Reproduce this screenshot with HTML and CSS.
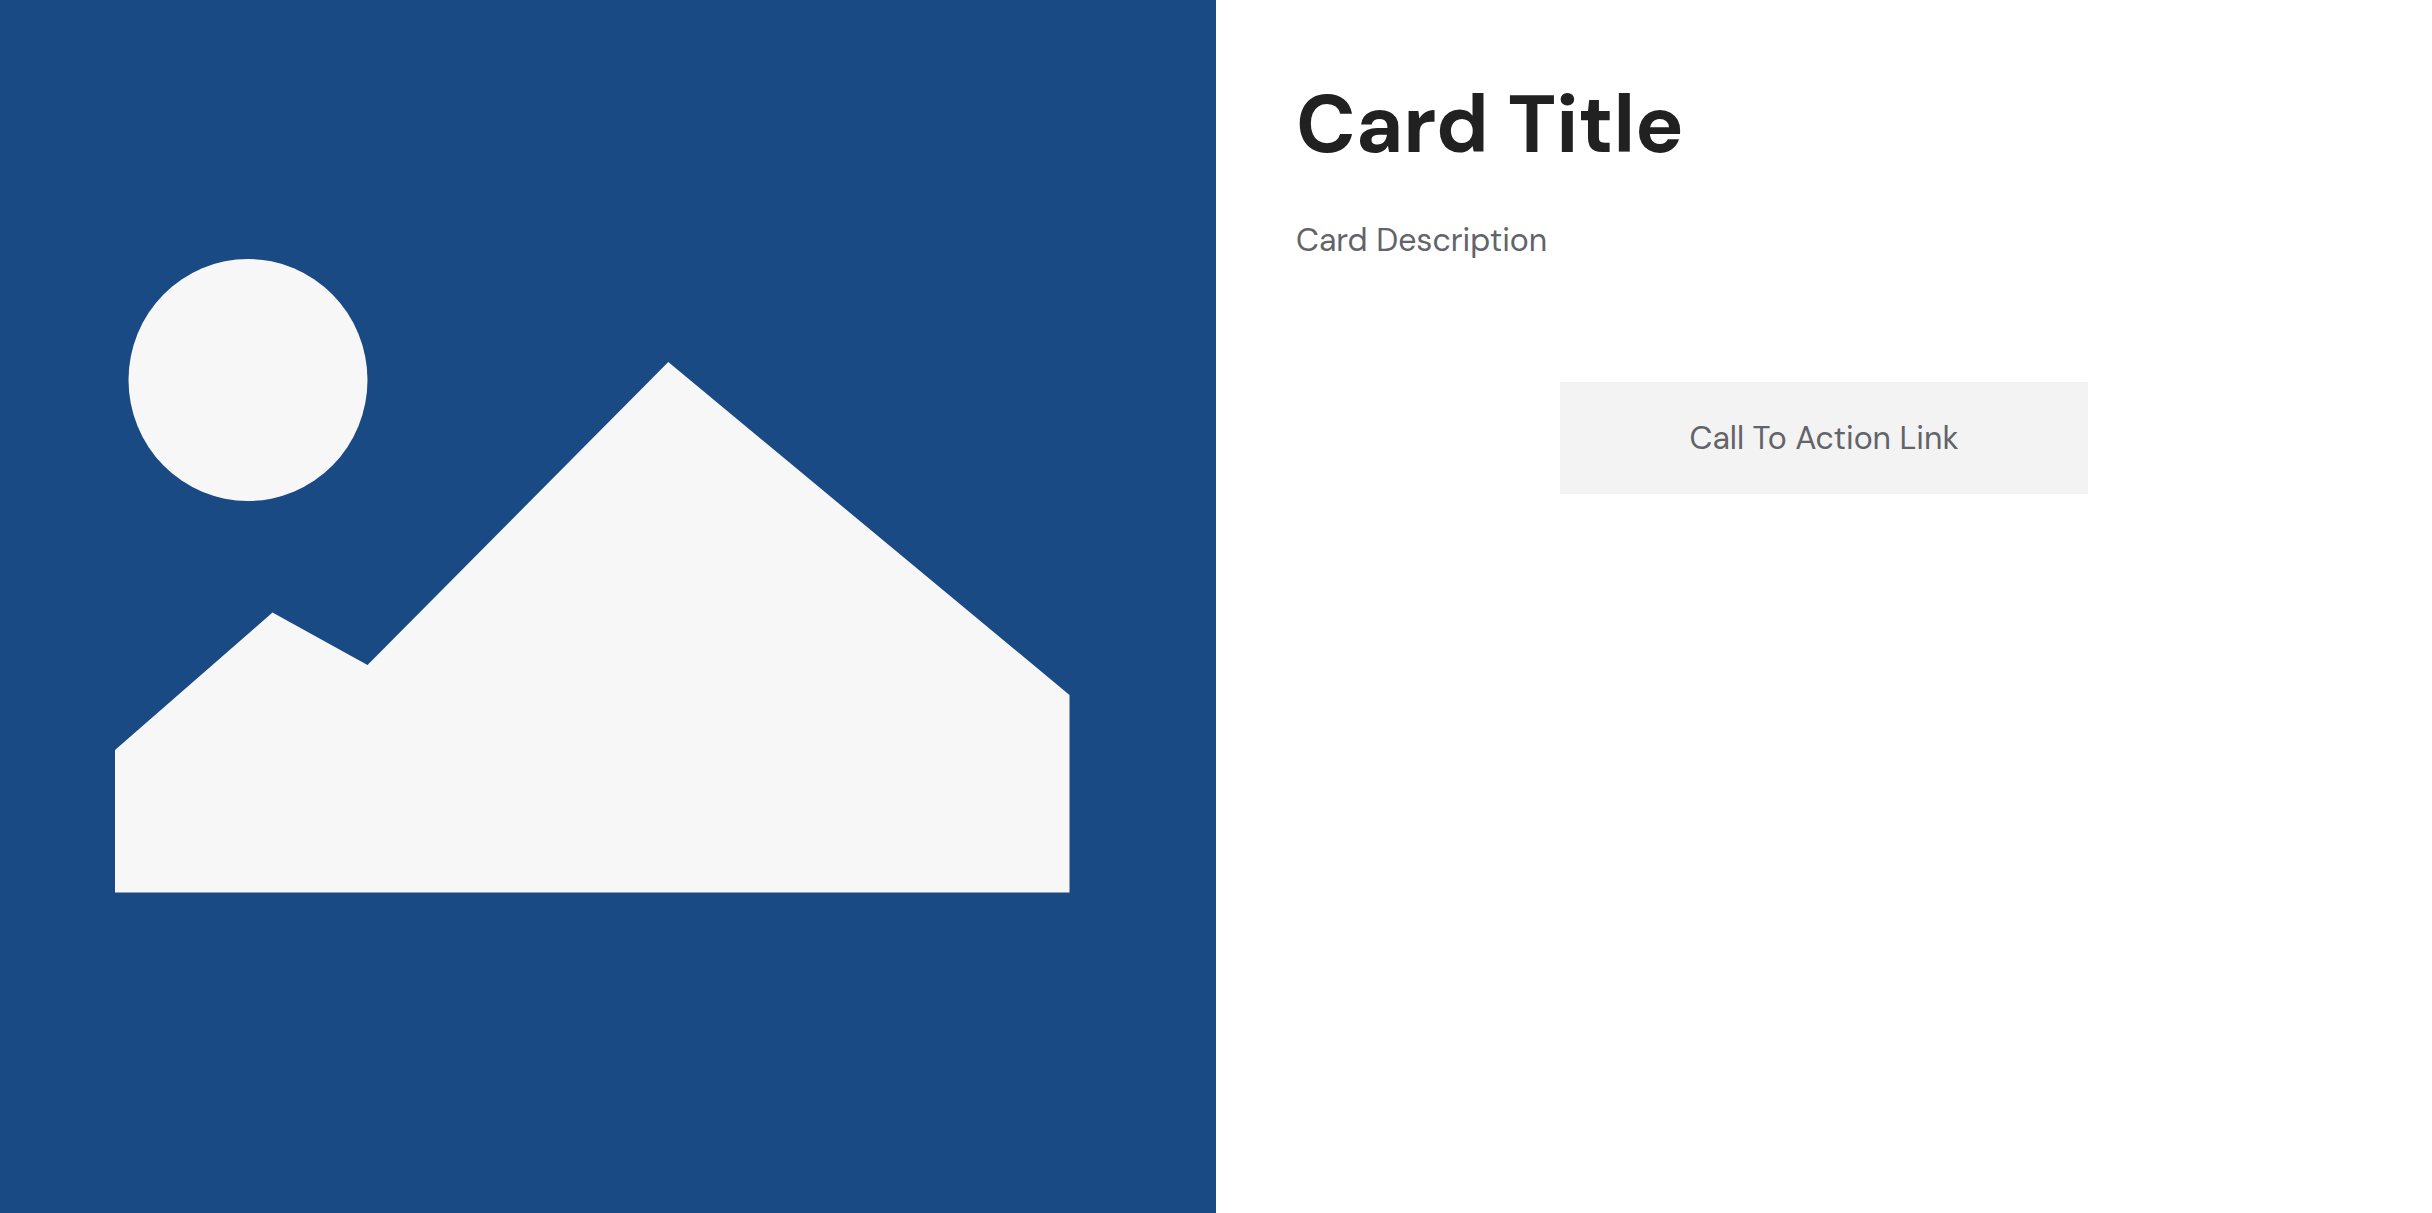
FILE: index.html
```html
<!DOCTYPE html>
<html lang="en">
<head>
<meta charset="utf-8">
<meta name="viewport" content="width=device-width, initial-scale=1">
<title>Card Title</title>
<link rel="stylesheet" href="styles.css">
</head>
<body>
<article class="card">
  <div class="card-media">
    <svg class="card-image" viewBox="0 0 1216 1213" preserveAspectRatio="xMidYMid slice" role="img" aria-label="Placeholder image">
      <ellipse cx="248" cy="380" rx="119.5" ry="121"/>
      <path d="M115 750L272.5 612.5L367.5 665L668.3 362L1069.5 695V892.5H115Z"/>
    </svg>
  </div>
  <div class="card-body">
    <h1 class="card-title">Card Title</h1>
    <p class="card-description">Card Description</p>
    <a class="card-action" href="#">Call To Action Link</a>
  </div>
</article>
</body>
</html>
```
FILE: styles.css
```css
* {
  box-sizing: border-box;
}

body {
  margin: 0;
  background: #fff;
  color: #626469;
  font-family: "DM Sans", Inter, sans-serif;
  font-size: 32px;
  line-height: 48px;
}

.card {
  display: grid;
  grid-template-columns: 1fr 1fr;
  min-height: 100vh;
}

.card-media {
  display: grid;
  background: #1a4a84;
}

.card-image {
  display: block;
  width: 100%;
  height: 100%;
  fill: #f7f7f7;
}

.card-body {
  display: flex;
  flex-direction: column;
  padding: 80px;
}

.card-title {
  margin: 0;
  color: #212121;
  font-size: 81px;
  font-weight: 700;
  line-height: 90px;
}

.card-description {
  margin: 46px 0 0;
}

.card-action {
  align-self: center;
  width: 50%;
  margin-top: 118px;
  padding: 32px;
  background: #f3f3f3;
  color: inherit;
  text-align: center;
  text-decoration: none;
}
```
